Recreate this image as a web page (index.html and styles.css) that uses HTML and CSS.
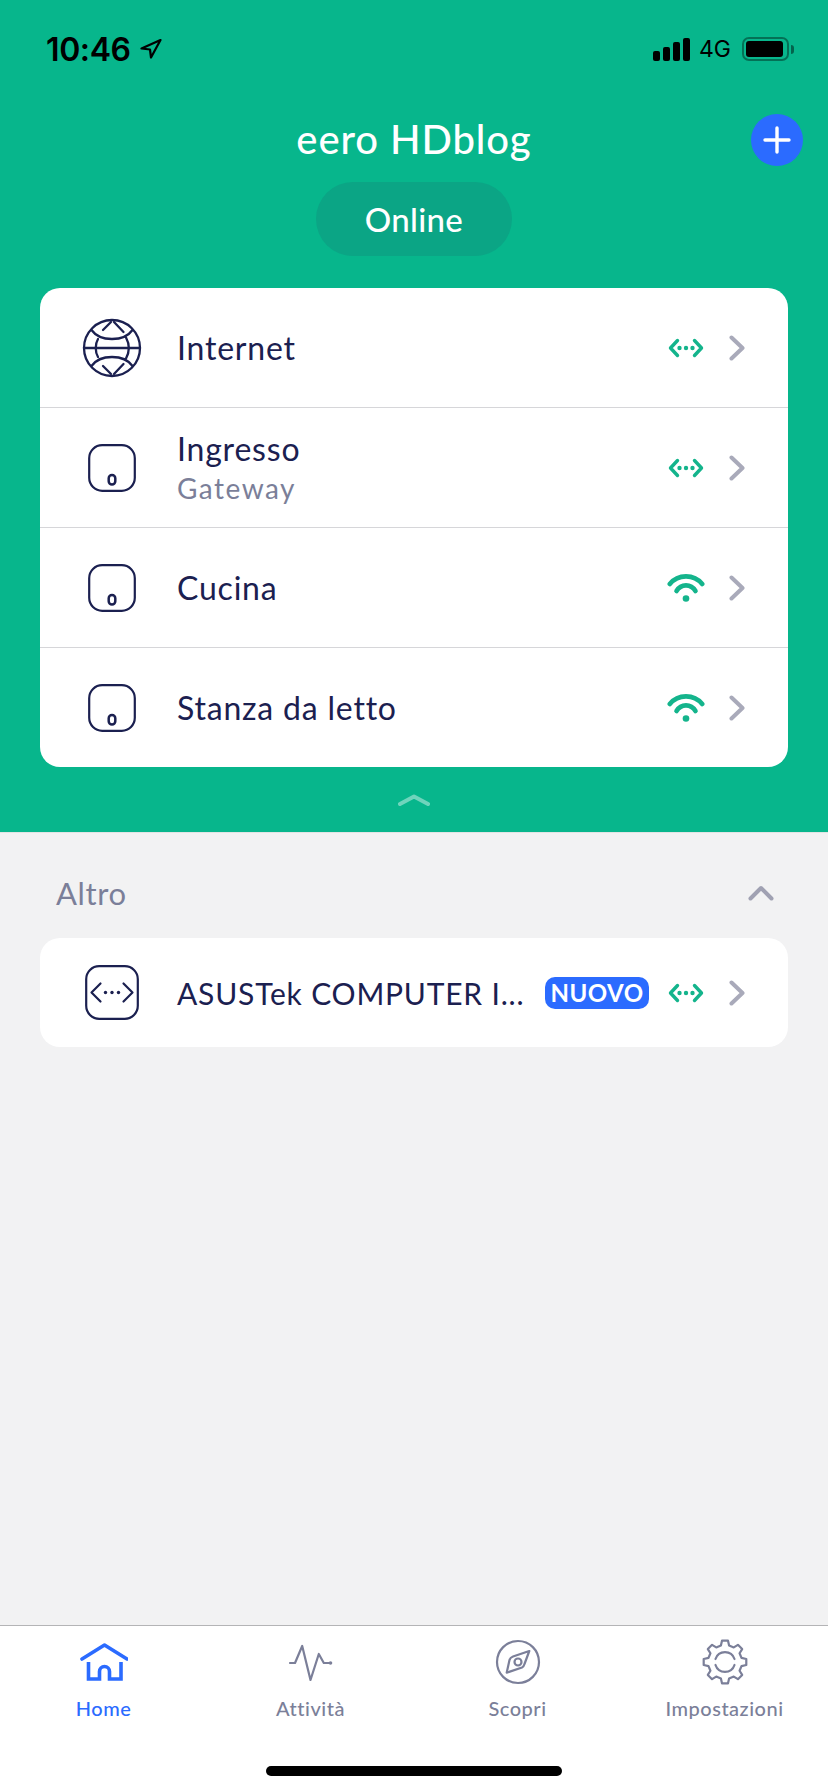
FILE: index.html
```html
<!DOCTYPE html>
<html lang="it">
<head>
<meta charset="utf-8">
<title>eero HDblog</title>
<link rel="stylesheet" href="styles.css">
</head>
<body>
<svg class="sprite" aria-hidden="true">
  <symbol id="link" viewBox="0 0 36 24">
    <path d="M9.500 4.500 2.500 12l7 7.500M26.500 4.500l7 7.500-7 7.500" fill="none" stroke="currentColor" stroke-width="3.4" stroke-linecap="round" stroke-linejoin="round"/>
    <circle cx="11.500" cy="12" r="2.200" fill="currentColor"/><circle cx="18" cy="12" r="2.200" fill="currentColor"/><circle cx="24.500" cy="12" r="2.200" fill="currentColor"/>
  </symbol>
  <symbol id="wifi" viewBox="0 0 38 30">
    <g fill="none" stroke="currentColor" stroke-width="4.600" stroke-linecap="round">
      <path d="M2.800 11C11 .8 27 .8 35.200 11"/>
      <path d="M9.500 18C14 10.500 24 10.500 28.500 18"/>
    </g>
    <circle cx="19" cy="25.500" r="3.300" fill="currentColor"/>
  </symbol>
  <symbol id="chev" viewBox="0 0 16 26">
    <path d="M2.500 2.500 13.500 13 2.500 23.500" fill="none" stroke="currentColor" stroke-width="4" stroke-linecap="round" stroke-linejoin="round"/>
  </symbol>
  <symbol id="eero" viewBox="0 0 48 48">
    <rect x="1.200" y="1.200" width="45.600" height="45.600" rx="13" fill="none" stroke="currentColor" stroke-width="2.200"/>
    <rect x="20.700" y="31" width="6.600" height="9.500" rx="3.300" fill="none" stroke="currentColor" stroke-width="2.500"/>
  </symbol>
</svg>
<main class="app">
  <section class="top">
    <div class="status">
      <div class="clock">
        <span>10:46</span>
        <svg class="loc" viewBox="0 0 22 20"><path d="M20.500 1 1.500 9.500l8.500 1 1 8z" fill="none" stroke="currentColor" stroke-width="2.200" stroke-linejoin="round"/></svg>
      </div>
      <div class="sys">
        <div class="bars"><i class="b1"></i><i class="b2"></i><i class="b3"></i><i class="b4"></i></div>
        <span class="net">4G</span>
        <div class="batt"><div class="batt-fill"></div></div>
        <div class="nub"></div>
      </div>
    </div>
    <h1 class="title">eero HDblog</h1>
    <button class="add" aria-label="Aggiungi"><svg viewBox="0 0 28 28"><path d="M14 2v24M2 14h24" stroke="#fff" stroke-width="3.400" stroke-linecap="round"/></svg></button>
    <div class="pill">Online</div>
    <div class="card">
      <div class="row">
        <div class="ico"><svg class="globe" viewBox="0 0 64 64"><g fill="none" stroke="currentColor" stroke-width="2.300" stroke-linecap="round"><circle cx="32" cy="32" r="28"/><path d="M4 32h56"/><path d="M11.500 14C20 26 44 26 52.500 14"/><path d="M11.500 50C20 38 44 38 52.500 50"/><path d="M18 23C15 28 15 36 18 41"/><path d="M46 21.500C49.500 28 49.500 36 46 42.500"/><path d="M23 14 31 6M34 6l9.500 10"/><path d="M23 50 31 58M34 58l9.500-10"/></g></svg></div>
        <div class="txt"><div class="name">Internet</div></div>
        <svg class="st-link"><use href="#link"/></svg>
        <svg class="chev"><use href="#chev"/></svg>
      </div>
      <div class="row">
        <div class="ico"><svg class="dev"><use href="#eero"/></svg></div>
        <div class="txt"><div class="name">Ingresso</div><div class="sub">Gateway</div></div>
        <svg class="st-link"><use href="#link"/></svg>
        <svg class="chev"><use href="#chev"/></svg>
      </div>
      <div class="row">
        <div class="ico"><svg class="dev"><use href="#eero"/></svg></div>
        <div class="txt"><div class="name">Cucina</div></div>
        <svg class="st-wifi"><use href="#wifi"/></svg>
        <svg class="chev"><use href="#chev"/></svg>
      </div>
      <div class="row">
        <div class="ico"><svg class="dev"><use href="#eero"/></svg></div>
        <div class="txt"><div class="name">Stanza da letto</div></div>
        <svg class="st-wifi"><use href="#wifi"/></svg>
        <svg class="chev"><use href="#chev"/></svg>
      </div>
    </div>
    <svg class="fold" viewBox="0 0 32 12"><path d="M2 10 16 2.500 30 10" fill="none" stroke="currentColor" stroke-width="4" stroke-linecap="round" stroke-linejoin="round"/></svg>
  </section>
  <section class="rest">
    <div class="sec-head">
      <span>Altro</span>
      <svg class="sec-chev" viewBox="0 0 26 16"><path d="M2.500 13.500 13 3l10.500 10.500" fill="none" stroke="currentColor" stroke-width="4" stroke-linecap="round" stroke-linejoin="round"/></svg>
    </div>
    <div class="card other">
      <div class="row solo">
        <div class="ico"><svg class="modem" viewBox="0 0 54 55"><rect x="1.200" y="1.200" width="51.600" height="52.600" rx="13" fill="none" stroke="currentColor" stroke-width="2.200"/><path d="M15.500 18.500 6.500 27.500l9 9M38.500 18.500l9 9-9 9" fill="none" stroke="currentColor" stroke-width="2.200" stroke-linecap="round" stroke-linejoin="round"/><circle cx="20.500" cy="27.500" r="1.700" fill="currentColor"/><circle cx="27" cy="27.500" r="1.700" fill="currentColor"/><circle cx="33.500" cy="27.500" r="1.700" fill="currentColor"/></svg></div>
        <div class="txt"><div class="name caps">ASUSTek COMPUTER I...</div></div>
        <span class="badge">NUOVO</span>
        <svg class="st-link"><use href="#link"/></svg>
        <svg class="chev"><use href="#chev"/></svg>
      </div>
    </div>
  </section>
  <nav class="tabs">
    <a class="tab on">
      <svg viewBox="0 -5 48 48"><path d="M2 16 24.500 2 47 16" fill="none" stroke="currentColor" stroke-width="3.600" stroke-linecap="round" stroke-linejoin="round"/><path d="M8.500 19v17h11V28.500a5 5 0 0 1 10 0V36h11.500V19" fill="none" stroke="currentColor" stroke-width="3.600" stroke-linejoin="miter"/></svg>
      <span>Home</span>
    </a>
    <a class="tab">
      <svg viewBox="0 -5 48 48"><path d="M3 20h5L15.200 3l8.300 34 8.300-26 5 9h6" fill="none" stroke="currentColor" stroke-width="2.200" stroke-linecap="round" stroke-linejoin="round"/><circle cx="43.500" cy="20" r="1.800" fill="currentColor"/></svg>
      <span>Attività</span>
    </a>
    <a class="tab">
      <svg viewBox="0 0 48 48"><g fill="none" stroke="currentColor" stroke-width="2.200" stroke-linejoin="round"><circle cx="24" cy="24" r="21"/><path d="M35.300 13 19 18.500c-2 .7-3 1.700-3.500 3.500L12.700 34.700 28 29.500c1.500-.7 2-1.700 2.500-3.500z"/><circle cx="24" cy="24" r="3.500"/></g></svg>
      <span>Scopri</span>
    </a>
    <a class="tab">
      <svg viewBox="0 0 48 48"><g fill="none" stroke="currentColor" stroke-width="2.200" stroke-linecap="round" stroke-linejoin="round"><path d="M21 2.700H27L28.100 7.500Q30.500 8.500 32.760 9.430L36.940 6.830 41.170 11.060 38.570 15.240Q39.500 17.500 40.500 19.890L45.290 21V27L40.500 28.110Q39.500 30.500 38.570 32.760L41.170 36.940 36.940 41.170 32.760 38.570Q30.500 39.500 28.100 40.500L27 45.300H21L19.900 40.500Q17.500 39.500 15.240 38.570L11.060 41.170 6.830 36.940 9.430 32.760Q8.500 30.500 7.500 28.100L2.700 27V21L7.500 19.900Q8.500 17.500 9.430 15.240L6.830 11.060 11.060 6.830 15.240 9.430Q17.500 8.500 19.900 7.500Z"/><path d="M14.500 21a10 10 0 0 1 19 0M14.500 27a10 10 0 0 0 19 0"/></g></svg>
      <span>Impostazioni</span>
    </a>
  </nav>
  <div class="home-bar"><div class="home-ind"></div></div>
</main>
</body>
</html>
```
FILE: styles.css
```css
* { box-sizing: border-box; }
html, body { margin: 0; padding: 0; }
body { width: 828px; height: 1792px; overflow: hidden; background: #f2f2f3; font-family: Lato, "Noto Sans", sans-serif; color: #1b2050; }
.sprite { position: absolute; width: 0; height: 0; }
.app { width: 828px; height: 1792px; display: flex; flex-direction: column; }

.top { position: relative; height: 832px; background: #07b68c; padding-top: 35px; display: flex; flex-direction: column; align-items: center; }
.status { width: 100%; height: 28px; padding: 0 34px 0 46px; display: flex; justify-content: space-between; align-items: center; color: #000; }
.clock { display: flex; align-items: center; gap: 9px; font-family: Inter, sans-serif; font-size: 32px; font-weight: 600; letter-spacing: -0.4px; }
.loc { width: 22px; height: 20px; }
.sys { display: flex; align-items: center; }
.bars { display: flex; align-items: flex-end; gap: 3px; height: 23px; }
.bars i { display: block; width: 7px; background: #000; border-radius: 2px; }
.b1 { height: 10px; } .b2 { height: 14px; } .b3 { height: 19px; } .b4 { height: 23px; }
.net { margin-left: 9px; font-family: Inter, sans-serif; font-size: 23px; font-weight: 400; width: 43px; }
.batt { width: 47px; height: 24px; border: 2.500px solid rgba(0,0,0,.38); border-radius: 7px; padding: 2px; }
.batt-fill { width: 37px; height: 100%; background: #000; border-radius: 3px; }
.nub { width: 3px; height: 9px; margin-left: 2px; background: rgba(0,0,0,.45); border-radius: 0 3px 3px 0; }

.title { margin: 53px 0 0; font-size: 40px; line-height: 46px; font-weight: 500; color: #fff; letter-spacing: .9px; }
.add { position: absolute; left: 751px; top: 114px; width: 52px; height: 52px; padding: 12px; border: 0; border-radius: 50%; background: #2b6bff; }
.add svg { display: block; width: 28px; height: 28px; }
.pill { margin-top: 20px; width: 196px; height: 74px; border-radius: 37px; background: #0ba585; color: #fff; font-size: 33px; font-weight: 500; letter-spacing: .3px; display: flex; align-items: center; justify-content: center; }

.card { width: 748px; background: #fff; border-radius: 20px; overflow: hidden; }
.top .card { margin-top: 32px; }
.row { height: 120px; display: flex; align-items: center; padding-right: 43px; border-top: 1px solid #d6d6d9; }
.row:first-child { height: 119px; border-top: 0; }
.row.solo { height: 109px; }
.ico { width: 137px; padding: 0 33px 0 40px; display: flex; align-items: center; justify-content: center; flex: none; color: #1b2050; }
.globe { width: 64px; height: 64px; flex: none; }
.dev { width: 48px; height: 48px; flex: none; }
.modem { width: 54px; height: 55px; flex: none; }
.txt { flex: 1; min-width: 0; }
.name { font-size: 32px; line-height: 36px; letter-spacing: .8px; color: #1b2050; white-space: nowrap; }
.name.caps { font-size: 30px; letter-spacing: .8px; }
.sub { margin-top: 5px; font-size: 28px; line-height: 32px; letter-spacing: 1.5px; color: #7b7f99; }
.st-link { width: 36px; height: 24px; color: #14b48c; flex: none; margin-right: 25px; }
.st-wifi { width: 38px; height: 30px; color: #14b48c; flex: none; margin-right: 24px; }
.chev { width: 16px; height: 26px; color: #a9aaba; flex: none; }
.fold { width: 32px; height: 12px; margin-top: 27px; color: rgba(255,255,255,.42); }

.rest { flex: 1; border-top: 1px solid #e2e4e4; }
.sec-head { height: 105px; padding: 15px 54px 0 56px; display: flex; justify-content: space-between; align-items: center; font-size: 31px; color: #7b7f99; letter-spacing: .6px; }
.sec-chev { width: 26px; height: 16px; color: #a0a1b2; }
.other { margin-left: 40px; }
.badge { width: 104px; height: 32px; border-radius: 10px; margin-right: 19px; background: #2b6bff; color: #fff; font-size: 24px; font-weight: 700; letter-spacing: .5px; display: flex; align-items: center; justify-content: center; flex: none; }

.tabs { height: 111px; padding-top: 12px; background: #fff; border-top: 1px solid #b4b4b6; display: grid; grid-template-columns: repeat(4, 1fr); }
.tab { display: flex; flex-direction: column; align-items: center; color: #7b7f99; font-size: 20px; font-weight: 500; letter-spacing: .5px; }
.tab svg { width: 48px; height: 48px; }
.tab span { margin-top: 10px; line-height: 24px; }
.tab.on { color: #2b6bff; }
.home-bar { height: 56px; background: #fff; padding-top: 30px; display: flex; justify-content: center; }
.home-ind { width: 296px; height: 10px; background: #000; border-radius: 5px; }
```
